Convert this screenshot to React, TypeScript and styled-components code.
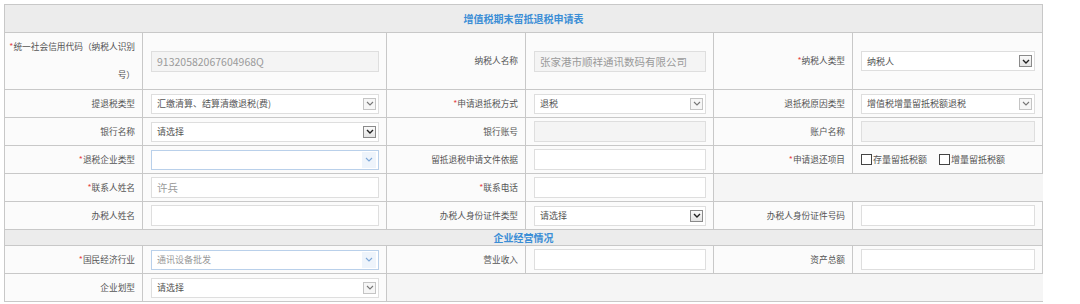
import styled, { createGlobalStyle, css } from 'styled-components';

const GlobalStyle = createGlobalStyle`
  body {
    margin: 0;
    background: #fff;
    font-family: "Noto Sans CJK SC", "Liberation Sans", sans-serif;
    color: #444;
  }
`;

const Page = styled.div`
  padding: 4px 0 0 4px;
`;

const Table = styled.table`
  width: 1038px;
  border-collapse: collapse;
  table-layout: fixed;
  background: #fbfbfb;
`;

const Cell = styled.td`
  border: 1px solid #c8c8c8;
  height: 27px;
  padding: 0;
  vertical-align: middle;
  font-size: 9px;
`;

const TitleCell = styled(Cell)<{ $small?: boolean }>`
  height: ${(p) => (p.$small ? '15px' : '27px')};
  background: #ececec;
  color: #3b8ed6;
  font-size: 10px;
  font-weight: bold;
  text-align: center;
  line-height: ${(p) => (p.$small ? '15px' : '27px')};
`;

const LabelCell = styled(Cell)<{ $tall?: boolean }>`
  text-align: right;
  padding-right: 7px;
  padding-left: 2px;
  color: #555;
  font-size: 8.7px;
  line-height: ${(p) => (p.$tall ? '28px' : '14px')};
  height: ${(p) => (p.$tall ? '56px' : '27px')};
`;

const FieldCell = styled(Cell)`
  padding: 0 7px 0 8px;
`;

const EmptyCell = styled(Cell)`
  background: #f5f5f5;
  border-left: none;
  border-right: none;
`;

const Star = styled.span`
  color: #e64545;
`;

const Input = styled.div<{ $disabled?: boolean; $faded?: boolean }>`
  box-sizing: border-box;
  height: 21px;
  border: 1px solid #dedede;
  background: ${(p) => (p.$disabled ? '#f4f4f4' : '#fff')};
  color: ${(p) => (p.$disabled || p.$faded ? '#9a9a9a' : '#444')};
  font-size: 10.5px;
  line-height: 19px;
  padding-left: 5px;
  white-space: nowrap;
  overflow: hidden;
`;

type ArrowKind = 'dark' | 'light' | 'blue';

const SelectBox = styled.div<{ $kind: ArrowKind; $muted?: boolean }>`
  box-sizing: border-box;
  height: 20px;
  display: flex;
  align-items: center;
  justify-content: space-between;
  border: 1px solid ${(p) => (p.$kind === 'blue' ? '#b9d0ea' : '#dedede')};
  background: #fff;
  color: ${(p) => (p.$muted ? '#999' : '#555')};
  font-size: 9px;
  padding: 0 2px 0 5px;
  white-space: nowrap;
`;

const ArrowBox = styled.span<{ $kind: ArrowKind }>`
  display: flex;
  align-items: center;
  justify-content: center;
  width: 13px;
  height: 12px;
  box-sizing: border-box;
  ${(p) =>
    p.$kind === 'dark'
      ? css`
          border: 1px solid #8a8a8a;
          background: linear-gradient(#fafafa, #e4e4e4);
          color: #222;
        `
      : p.$kind === 'light'
      ? css`
          border: 1px solid #c4c4c4;
          background: #f6f6f6;
          color: #777;
        `
      : css`
          width: 14px;
          height: 16px;
          background: #eef4fb;
          color: #7ea8d8;
        `}
`;

const CheckRow = styled.div`
  display: flex;
  align-items: center;
  gap: 12px;
  font-size: 9px;
  color: #555;
`;

const CheckItem = styled.label`
  display: flex;
  align-items: center;
`;

const CheckSquare = styled.span`
  width: 9px;
  height: 9px;
  border: 1px solid #444;
  background: #fff;
  margin-right: 1px;
`;

function Select({ value, kind, muted }: { value: string; kind: ArrowKind; muted?: boolean }) {
  return (
    <SelectBox $kind={kind} $muted={muted}>
      <span>{value}</span>
      <ArrowBox $kind={kind}>
        <svg width="8" height="5" viewBox="0 0 8 5">
          <path
            d="M1 1 L4 4 L7 1"
            fill="none"
            stroke="currentColor"
            strokeWidth={kind === 'dark' ? 1.4 : 1.1}
          />
        </svg>
      </ArrowBox>
    </SelectBox>
  );
}

function Label({ text, required, tall }: { text: string; required?: boolean; tall?: boolean }) {
  return (
    <LabelCell $tall={tall}>
      {required && <Star>*</Star>}
      {text}
    </LabelCell>
  );
}

export default function App() {
  return (
    <Page>
      <GlobalStyle />
      <Table>
        <colgroup>
          <col style={{ width: 138 }} />
          <col style={{ width: 244 }} />
          <col style={{ width: 139 }} />
          <col style={{ width: 188 }} />
          <col style={{ width: 139 }} />
          <col style={{ width: 190 }} />
        </colgroup>
        <tbody>
          <tr>
            <TitleCell colSpan={6}>增值税期末留抵退税申请表</TitleCell>
          </tr>
          <tr>
            <Label text="统一社会信用代码（纳税人识别号）" required tall />
            <FieldCell>
              <Input $disabled>91320582067604968Q</Input>
            </FieldCell>
            <Label text="纳税人名称" />
            <FieldCell>
              <Input $disabled>张家港市顺祥通讯数码有限公司</Input>
            </FieldCell>
            <Label text="纳税人类型" required />
            <FieldCell>
              <Select value="纳税人" kind="dark" />
            </FieldCell>
          </tr>
          <tr>
            <Label text="提退税类型" />
            <FieldCell>
              <Select value="汇缴清算、结算清缴退税(费)" kind="light" />
            </FieldCell>
            <Label text="申请退抵税方式" required />
            <FieldCell>
              <Select value="退税" kind="light" />
            </FieldCell>
            <Label text="退抵税原因类型" />
            <FieldCell>
              <Select value="增值税增量留抵税额退税" kind="light" />
            </FieldCell>
          </tr>
          <tr>
            <Label text="银行名称" />
            <FieldCell>
              <Select value="请选择" kind="dark" />
            </FieldCell>
            <Label text="银行账号" />
            <FieldCell>
              <Input $disabled />
            </FieldCell>
            <Label text="账户名称" />
            <FieldCell>
              <Input $disabled />
            </FieldCell>
          </tr>
          <tr>
            <Label text="退税企业类型" required />
            <FieldCell>
              <Select value="" kind="blue" />
            </FieldCell>
            <Label text="留抵退税申请文件依据" />
            <FieldCell>
              <Input />
            </FieldCell>
            <Label text="申请退还项目" required />
            <FieldCell>
              <CheckRow>
                <CheckItem>
                  <CheckSquare />
                  存量留抵税额
                </CheckItem>
                <CheckItem>
                  <CheckSquare />
                  增量留抵税额
                </CheckItem>
              </CheckRow>
            </FieldCell>
          </tr>
          <tr>
            <Label text="联系人姓名" required />
            <FieldCell>
              <Input $faded>许兵</Input>
            </FieldCell>
            <Label text="联系电话" required />
            <FieldCell>
              <Input />
            </FieldCell>
            <EmptyCell colSpan={2} />
          </tr>
          <tr>
            <Label text="办税人姓名" />
            <FieldCell>
              <Input />
            </FieldCell>
            <Label text="办税人身份证件类型" />
            <FieldCell>
              <Select value="请选择" kind="dark" />
            </FieldCell>
            <Label text="办税人身份证件号码" />
            <FieldCell>
              <Input />
            </FieldCell>
          </tr>
          <tr>
            <TitleCell colSpan={6} $small>
              企业经营情况
            </TitleCell>
          </tr>
          <tr>
            <Label text="国民经济行业" required />
            <FieldCell>
              <Select value="通讯设备批发" kind="blue" muted />
            </FieldCell>
            <Label text="营业收入" />
            <FieldCell>
              <Input />
            </FieldCell>
            <Label text="资产总额" />
            <FieldCell>
              <Input />
            </FieldCell>
          </tr>
          <tr>
            <Label text="企业划型" />
            <FieldCell>
              <Select value="请选择" kind="light" />
            </FieldCell>
            <EmptyCell colSpan={4} />
          </tr>
        </tbody>
      </Table>
    </Page>
  );
}
